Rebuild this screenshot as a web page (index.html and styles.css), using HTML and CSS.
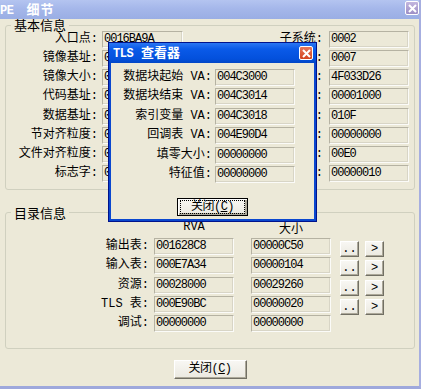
FILE: index.html
```html
<!DOCTYPE html>
<html lang="zh-CN">
<head>
  <meta charset="UTF-8">
  <title>PE 细节</title>
  <link rel="stylesheet" href="styles.css">
</head>
<body>
  <div class="window">
    <div class="titlebar">
      <span class="title"><span class="latin">PE</span>细节</span>
      <span class="close-btn inactive">
        <svg width="9" height="9" viewBox="0 0 9 9"><path d="M1 1L8 8M8 1L1 8" stroke="#fff" stroke-width="2"/></svg>
      </span>
    </div>

    <div class="client">
      <fieldset class="group basic">
        <legend>基本信息</legend>
        <div class="basic-grid">
          <label>入口点:</label><div class="field">0016BA9A</div>
          <label>子系统:</label><div class="field">0002</div>
          <label>镜像基址:</label><div class="field">00400000</div>
          <label>区段数目:</label><div class="field">0007</div>
          <label>镜像大小:</label><div class="field">00171000</div>
          <label>时间日期标志:</label><div class="field">4F033D26</div>
          <label>代码基址:</label><div class="field">00001000</div>
          <label>部首大小:</label><div class="field">00001000</div>
          <label>数据基址:</label><div class="field">00117000</div>
          <label>特征值:</label><div class="field">010F</div>
          <label>节对齐粒度:</label><div class="field">00001000</div>
          <label>校验和:</label><div class="field">00000000</div>
          <label>文件对齐粒度:</label><div class="field">00001000</div>
          <label>可选头部大小:</label><div class="field">00E0</div>
          <label>标志字:</label><div class="field">010B</div>
          <label>RVA数及大小:</label><div class="field">00000010</div>
        </div>
      </fieldset>

      <fieldset class="group dir">
        <legend>目录信息</legend>
        <div class="dir-grid">
          <span></span><span class="col-head">RVA</span><span class="col-head size">大小</span><span></span><span></span>

          <label>输出表:</label><div class="field">001628C8</div><div class="field size">00000C50</div>
          <button class="btn small">..</button><button class="btn small">&gt;</button>

          <label>输入表:</label><div class="field">000E7A34</div><div class="field size">00000104</div>
          <button class="btn small">..</button><button class="btn small">&gt;</button>

          <label>资源:</label><div class="field">00028000</div><div class="field size">00029260</div>
          <button class="btn small">..</button><button class="btn small">&gt;</button>

          <label>TLS 表:</label><div class="field">000E90BC</div><div class="field size">00000020</div>
          <button class="btn small">..</button><button class="btn small">&gt;</button>

          <label>调试:</label><div class="field">00000000</div><div class="field size">00000000</div>
          <span></span><span></span>
        </div>
      </fieldset>

      <div class="footer">
        <button class="btn main">关闭(<u>C</u>)</button>
      </div>
    </div>

    <!-- TLS dialog, lies over the PE window -->
    <div class="dialog">
      <div class="dialog-title">
        <span class="title"><span class="latin">TLS</span>查看器</span>
        <span class="close-btn active">
          <svg width="9" height="9" viewBox="0 0 9 9"><path d="M1 1L8 8M8 1L1 8" stroke="#fff" stroke-width="2"/></svg>
        </span>
      </div>
      <div class="dialog-body">
        <div class="tls-grid">
          <label>数据块起始 VA:</label><div class="field">004C3000</div>
          <label>数据块结束 VA:</label><div class="field">004C3014</div>
          <label>索引变量 VA:</label><div class="field">004C3018</div>
          <label>回调表 VA:</label><div class="field">004E90D4</div>
          <label>填零大小:</label><div class="field">00000000</div>
          <label>特征值:</label><div class="field">00000000</div>
        </div>
        <div class="dialog-footer">
          <button class="btn main default"><span class="focus">关闭(<u>C</u>)</span></button>
        </div>
      </div>
    </div>
  </div>
</body>
</html>
```

FILE: styles.css
```css
body {
  margin: 0;
  background: #ece9d8;
  font-family: "Noto Sans CJK SC", sans-serif;
  font-size: 12px;
  color: #000;
}

.window {
  position: relative;
  width: 421px;
  height: 389px;
  box-sizing: border-box;
  border-right: 2px solid #a6aee0;
  border-bottom: 3px solid #9ea8dc;
  background: #ece9d8;
  overflow: hidden;
  display: flex;
  flex-direction: column;
}

.titlebar {
  height: 19px;
  flex: none;
  display: flex;
  align-items: center;
  justify-content: space-between;
  background: linear-gradient(180deg, #b4c4f0 0%, #a5b7ea 45%, #9aaee4 100%);
}
.titlebar .title {
  color: #fff;
  font-weight: bold;
  font-size: 13px;
  line-height: 17px;
  letter-spacing: 1px;
}
.title .latin {
  font-family: "Liberation Mono", monospace;
  font-size: 12px;
  font-weight: bold;
  letter-spacing: -0.5px;
  margin-right: 13px;
}

.close-btn {
  display: flex;
  align-items: center;
  justify-content: center;
  width: 12px;
  height: 12px;
  border: 1px solid #fff;
  border-radius: 2px;
}
.close-btn.inactive {
  background: linear-gradient(180deg, #c3b6de, #9d8fc6);
  margin-top: -3px;
}
.close-btn.active {
  background: linear-gradient(180deg, #e8775a, #d2421f);
  margin-right: 3px;
}

.client {
  flex: 1;
  padding: 0 4px 0 5px;
  display: flex;
  flex-direction: column;
}

.group {
  margin: 0;
  padding: 0;
  border: 1px solid #d0d0bf;
  border-radius: 3px;
}
.group legend {
  padding: 0 3px;
  margin-left: 5px;
  line-height: 12px;
  font-size: 13px;
}

.basic-grid {
  display: grid;
  grid-template-columns: 96px 81px 146px 80px;
  grid-auto-rows: 17px;
  row-gap: 2.15px;
  padding-bottom: 7px;
}

label {
  font-family: "Liberation Mono", "Noto Sans CJK SC", monospace;
  font-size: 12px;
  text-align: right;
  line-height: 17px;
  white-space: nowrap;
}
.basic-grid label {
  padding-right: 4px;
}
.basic-grid label:nth-child(4n+3) {
  padding-right: 6px;
}

.field {
  box-sizing: border-box;
  width: 80px;
  height: 17px;
  border: 1px solid;
  border-color: #b5b2a2 #fbfbf8 #fbfbf8 #b5b2a2;
  box-shadow: inset -1px -1px 0 #d8d5c6;
  padding-left: 1px;
  font-family: "Liberation Mono", monospace;
  font-size: 12px;
  letter-spacing: -1px;
  line-height: 14px;
  background: #ece9d8;
}
.basic-grid .field:nth-child(4n+2) {
  width: 81px;
}

.group.dir {
  margin-top: 17px;
}
.dir-grid {
  display: grid;
  grid-template-columns: 148px 96px 89px 26px 19px;
  grid-auto-rows: 17px;
  row-gap: 2.25px;
  padding-bottom: 16px;
}
.dir-grid label {
  padding-right: 5px;
}
.dir-grid .field.size {
  margin-left: 1px;
}
.col-head {
  width: 80px;
  text-align: center;
  line-height: 17px;
  font-family: "Liberation Mono", monospace;
}
.col-head.size {
  margin-left: 1px;
  font-family: "Noto Sans CJK SC", sans-serif;
}

.btn {
  box-sizing: border-box;
  padding: 0;
  font-family: "Liberation Mono", "Noto Sans CJK SC", monospace;
  font-size: 12px;
  color: #000;
  border: 1px solid;
  border-color: #fff #716f64 #716f64 #fff;
  box-shadow: inset -1px -1px 0 #aca899;
  background: linear-gradient(180deg, #f8f7f3, #ebe9e0);
}
.btn.small {
  width: 19px;
  height: 16px;
  margin-top: 3px;
  line-height: 12px;
}
.dir-grid .btn.small:nth-of-type(odd) {
  margin-left: 1px;
}

.footer {
  display: flex;
  justify-content: center;
  padding-top: 11px;
}
.btn.main {
  width: 73px;
  height: 19px;
  line-height: 15px;
  letter-spacing: -0.5px;
}
.btn u {
  text-decoration: underline;
}

/* TLS viewer dialog */
.dialog {
  position: absolute;
  left: 108px;
  top: 42px;
  width: 209px;
  height: 180px;
  box-sizing: border-box;
  border: 1px solid #00138c;
  display: flex;
  flex-direction: column;
}
.dialog-title {
  height: 20px;
  flex: none;
  display: flex;
  align-items: center;
  justify-content: space-between;
  background: linear-gradient(180deg, #2a76f2 0%, #0a5ae8 30%, #0350dc 80%, #0246c6 100%);
}
.dialog-title .title {
  color: #fff;
  font-weight: bold;
  font-size: 13px;
  margin-left: 4px;
  line-height: 18px;
}
.dialog-title .latin {
  margin-right: 8px;
}
.dialog-body {
  flex: 1;
  border: 2px solid #0a47cf;
  border-top: none;
  background: #ece9d8;
  padding-top: 6px;
}
.tls-grid {
  display: grid;
  grid-template-columns: 104px 80px;
  grid-auto-rows: 17px;
  row-gap: 2.4px;
}
.tls-grid label {
  padding-right: 3px;
}
.dialog-footer {
  display: flex;
  justify-content: center;
  padding-top: 15px;
}
.btn.main.default {
  width: 71px;
  height: 18px;
  border: 1px solid #000;
  box-shadow: inset 1px 1px 0 #fff, inset -2px -2px 0 #aca899;
  padding: 2px 3px;
}
.focus {
  display: block;
  height: 12px;
  line-height: 12px;
  outline: 1px dotted #000;
}
```
